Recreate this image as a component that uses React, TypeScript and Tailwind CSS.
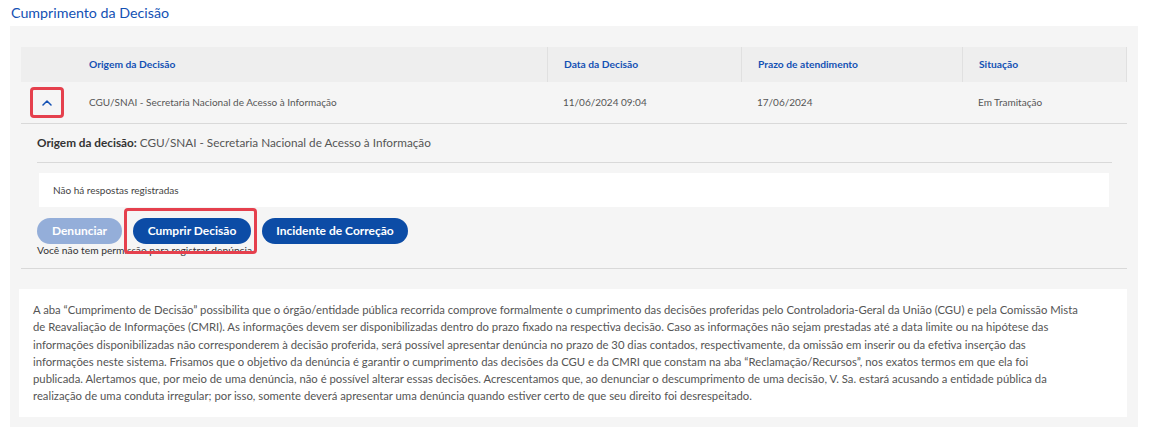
import React from "react";

const font = { fontFamily: "Lato, 'Open Sans', sans-serif" };

function ChevronUp() {
  return (
    <svg width="10" height="7" viewBox="0 0 10 7" fill="none">
      <path d="M1 6 L5 2 L9 6" stroke="#1351b4" strokeWidth="1.5" strokeLinecap="round" strokeLinejoin="round" />
    </svg>
  );
}

export default function App() {
  const lines = [
    "A aba \u201CCumprimento de Decisão\u201D possibilita que o órgão/entidade pública recorrida comprove formalmente o cumprimento das decisões proferidas pelo Controladoria-Geral da União (CGU) e pela Comissão Mista",
    "de Reavaliação de Informações (CMRI). As informações devem ser disponibilizadas dentro do prazo fixado na respectiva decisão. Caso as informações não sejam prestadas até a data limite ou na hipótese das",
    "informações disponibilizadas não corresponderem à decisão proferida, será possível apresentar denúncia no prazo de 30 dias contados, respectivamente, da omissão em inserir ou da efetiva inserção das",
    "informações neste sistema. Frisamos que o objetivo da denúncia é garantir o cumprimento das decisões da CGU e da CMRI que constam na aba \u201CReclamação/Recursos\u201D, nos exatos termos em que ela foi",
    "publicada. Alertamos que, por meio de uma denúncia, não é possível alterar essas decisões. Acrescentamos que, ao denunciar o descumprimento de uma decisão, V. Sa. estará acusando a entidade pública da",
    "realização de uma conduta irregular; por isso, somente deverá apresentar uma denúncia quando estiver certo de que seu direito foi desrespeitado.",
  ];
  return (
    <div className="w-[1150px] h-[438px] bg-white overflow-hidden" style={font}>
      <div className="pl-[10px] pr-[12px]">
        <h2 className="text-[14.25px] leading-[26px] text-[#1351b4] pl-[1px] h-[26px]">Cumprimento da Decisão</h2>
        <div className="bg-[#f5f5f5] h-[401px] pt-[21px] pl-[11px] pr-[11px]">
          {/* table */}
          <div className="w-[1106px]">
            <div className="flex h-[35px] bg-[#eeeeee] items-center text-[10.25px] font-bold text-[#1351b4]">
              <div className="w-[52px]" />
              <div className="w-[474px] pl-[16px]">Origem da Decisão</div>
              <div className="w-[194px] pl-[16px] h-full flex items-center border-l border-[#e0e0e0]">Data da Decisão</div>
              <div className="w-[221px] pl-[16px] h-full flex items-center border-l border-[#e0e0e0]">Prazo de atendimento</div>
              <div className="w-[165px] pl-[16px] h-full flex items-center border-x border-[#e0e0e0]">Situação</div>
            </div>
            <div className="flex h-[42px] items-center text-[10px] text-[#555555] border-b border-[#d9d9d9]">
              <div className="w-[52px] flex justify-center">
                <div className="w-[34px] h-[31px] border-[3px] border-[#e5404d] rounded-[4px] flex items-center justify-center">
                  <ChevronUp />
                </div>
              </div>
              <div className="w-[474px] pl-[16px]">CGU/SNAI - Secretaria Nacional de Acesso à Informação</div>
              <div className="w-[194px] pl-[16px]">11/06/2024 09:04</div>
              <div className="w-[221px] pl-[16px]">17/06/2024</div>
              <div className="w-[165px] pl-[16px]">Em Tramitação</div>
            </div>
            {/* expanded */}
            <div className="pl-[16px] pr-[15px] border-b border-[#d9d9d9]">
              <div className="h-[39px] flex items-end pb-[13px] text-[11.75px] text-[#555555] border-b border-[#d9d9d9] leading-none">
                <span className="font-bold text-[#333333] mr-[3px]">Origem da decisão:</span>
                <span>CGU/SNAI - Secretaria Nacional de Acesso à Informação</span>
              </div>
              <div className="mt-[10px] mx-[2px] w-[1070px] h-[34px] bg-white flex items-center pl-[14px] text-[10px] text-[#444444]">
                Não há respostas registradas
              </div>
              <div className="relative mt-[11px] pb-[11px]">
                <div className="flex gap-[11px]">
                  <button className="h-[26px] w-[85px] rounded-full bg-[#94aed9] text-white text-[12px] font-bold">Denunciar</button>
                  <button className="h-[26px] w-[118px] rounded-full bg-[#0c4ca6] text-white text-[12px] font-bold">Cumprir Decisão</button>
                  <button className="h-[26px] w-[146px] rounded-full bg-[#0c4ca6] text-white text-[12px] font-bold">Incidente de Correção</button>
                </div>
                <div className="text-[10.25px] leading-[13px] text-[#333333]">Você não tem permissão para registrar denúncia</div>
                <div className="absolute left-[87px] top-[-10px] w-[133px] h-[46px] border-[3px] border-[#e5404d] rounded-[4px]" />
              </div>
            </div>
          </div>
          {/* info box */}
          <div className="mt-[20px] ml-[-2px] w-[1108px] h-[128px] bg-white pl-[14px] pt-[12px] text-[11.3px] leading-[17.3px] text-[#555555]">
            {lines.map((l, i) => (
              <div key={i} className="whitespace-nowrap">{l}</div>
            ))}
          </div>
        </div>
      </div>
    </div>
  );
}
